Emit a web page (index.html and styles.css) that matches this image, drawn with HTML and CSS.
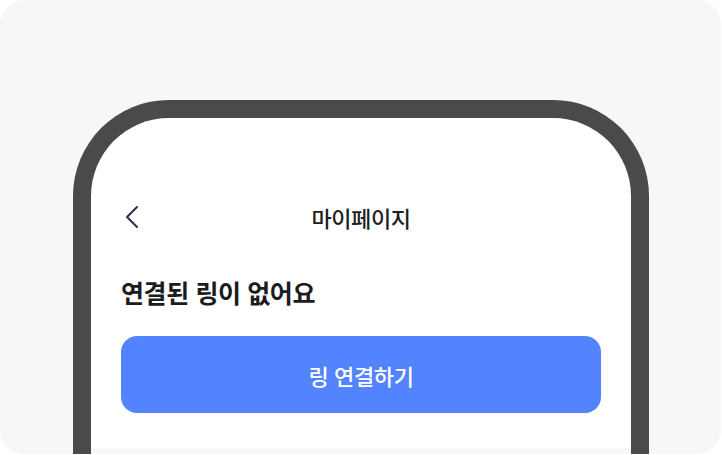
FILE: index.html
```html
<!DOCTYPE html>
<html lang="ko">
<head>
<meta charset="utf-8">
<link rel="stylesheet" href="styles.css">
</head>
<body>
<div class="card">
  <div class="phone">
    <div class="screen">
      <div class="status"></div>
      <header class="topbar">
        <span class="back">
          <svg width="14" height="24" viewBox="0 0 14 24"><path d="M12 2 L2 12 L12 22" fill="none" stroke="#2c3145" stroke-width="2" stroke-linecap="round" stroke-linejoin="round"/></svg>
        </span>
        <h1 class="title">마이페이지</h1>
        <span class="spacer"></span>
      </header>
      <section class="content">
        <h2 class="empty">연결된 링이 없어요</h2>
        <button class="connect">링 연결하기</button>
      </section>
      <div class="band"></div>
    </div>
  </div>
</div>
</body>
</html>
```
FILE: styles.css
```css
html, body {
  margin: 0;
  padding: 0;
  background: #ffffff;
}
body {
  font-family: "Noto Sans CJK KR", "Noto Sans", sans-serif;
}
.card {
  width: 721px;
  height: 454px;
  background: #f6f7f9;
  border-radius: 24px;
  overflow: hidden;
  padding: 100px 0 0 73px;
  box-sizing: border-box;
}
.phone {
  width: 576px;
  height: 500px;
  box-sizing: border-box;
  border: 18px solid #4a4a4a;
  border-bottom: none;
  border-radius: 96px 96px 0 0;
  background: #4a4a4a;
}
.screen {
  background: #ffffff;
  border-radius: 78px 78px 0 0;
  height: 100%;
  display: flex;
  flex-direction: column;
}
.status {
  height: 71px;
  flex: none;
}
.topbar {
  height: 56px;
  flex: none;
  display: grid;
  grid-template-columns: 40px 1fr 40px;
  align-items: center;
  padding: 0 30px 0 34px;
}
.back {
  display: flex;
  align-items: center;
  height: 24px;
}
.back svg {
  display: block;
}
.title {
  margin: 0 0 0 -4px;
  text-align: center;
  font-size: 22px;
  font-weight: 500;
  color: #1d1f24;
  letter-spacing: -0.4px;
  line-height: 28px;
}
.content {
  padding: 30px 30px 35px;
  display: flex;
  flex-direction: column;
  gap: 27px;
}
.empty {
  margin: 0;
  font-size: 25px;
  font-weight: 700;
  color: #1a1c21;
  letter-spacing: -0.4px;
  line-height: 34px;
}
.connect {
  height: 77px;
  border: none;
  border-radius: 16px;
  background: #5383ff;
  color: #ffffff;
  font-family: inherit;
  font-size: 22px;
  font-weight: 500;
  letter-spacing: -0.4px;
}
.band {
  flex: 1;
  background: #f6f7f9;
}
```
